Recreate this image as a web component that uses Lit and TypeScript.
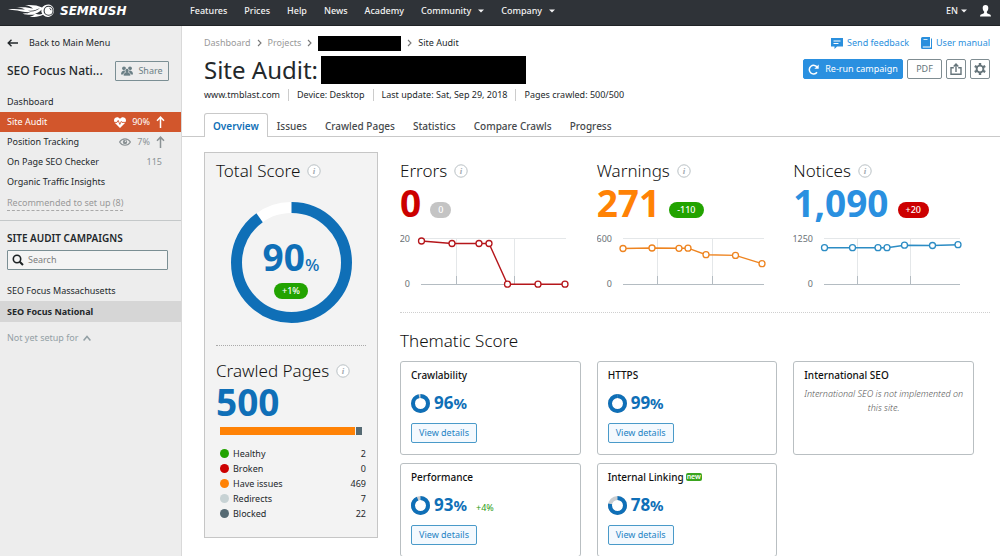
import { LitElement, html, svg, css } from "lit";
import { customElement, property } from "lit/decorators.js";

const caret = html`<svg class="caret" width="6" height="4" viewBox="0 0 6 4"><path d="M0 0.5h6L3 3.6z" fill="currentColor"/></svg>`;

@customElement("info-icon")
class InfoIcon extends LitElement {
  static styles = css`
    :host { display: inline-flex; }
    .mark { font: italic 700 9px "Liberation Serif", serif; }
  `;
  render() {
    return html`<svg width="14" height="14" viewBox="0 0 14 14" role="img" aria-label="Information">
      <circle cx="7" cy="7" r="6.2" fill="#fff" stroke="#b9c0c4" stroke-width="1"/>
      <text class="mark" x="7" y="10" text-anchor="middle" fill="#a3abb0">i</text>
    </svg>`;
  }
}

@customElement("ring-gauge")
class RingGauge extends LitElement {
  @property({ type: Number }) size = 20;
  @property({ type: Number }) thickness = 4;
  @property({ type: Number }) value = 0;
  @property() rest = "#c9cdd0";
  static styles = css`:host { display: inline-flex; }`;
  render() {
    const c = this.size / 2;
    const r = c - this.thickness / 2;
    const len = 2 * Math.PI * r;
    return html`<svg width=${this.size} height=${this.size} viewBox="0 0 ${this.size} ${this.size}">
      <circle cx=${c} cy=${c} r=${r} fill="none" stroke=${this.rest} stroke-width=${this.thickness}/>
      <circle cx=${c} cy=${c} r=${r} fill="none" stroke="#0f6fb7" stroke-width=${this.thickness}
        stroke-dasharray="${(len * this.value) / 100} ${len}" transform="rotate(-90 ${c} ${c})"/>
    </svg>`;
  }
}

@customElement("trend-chart")
class TrendChart extends LitElement {
  @property({ attribute: false }) points: number[][] = [];
  @property({ attribute: false }) ticks: number[] = [];
  @property({ type: Number }) start = 22;
  @property({ type: Number }) end = 166;
  @property() max = "";
  @property() color = "#c00";
  static styles = css`
    :host { display: block; }
    .axis { font: 9px "Noto Sans", sans-serif; fill: #6b7276; }
  `;
  render() {
    const lx = this.start - 11;
    return html`<svg width="180" height="62" viewBox="0 0 180 62">
      <path d="M${this.start} 9.5H${this.end}" stroke="#e4e7e9"/>
      <path d="M${this.start} 55.5H${this.end}" stroke="#b4bcc2"/>
      ${this.ticks.map(t => svg`<path d="M${t} 9.5V47" stroke="#e4e7e9"/><path d="M${t} 47V55" stroke="#b4bcc2"/>`)}
      <text class="axis" x=${lx} y="13" text-anchor="end">${this.max}</text>
      <text class="axis" x=${lx} y="58" text-anchor="end">0</text>
      <polyline points=${this.points.map(p => p.join(",")).join(" ")} fill="none" stroke=${this.color} stroke-width="1.4"/>
      ${this.points.map(p => svg`<circle cx=${p[0]} cy=${p[1]} r="3" fill="#fff" stroke=${this.color} stroke-width="1.3"/>`)}
    </svg>`;
  }
}

const metrics = [
  { name: "Errors", value: "0", delta: "0", tone: "red", pill: "grey", color: "#b5161b", max: "20", start: 21, end: 166, ticks: [56.5, 114.5],
    points: [[21.5, 12], [52, 14.5], [79, 14.5], [89, 14.5], [107.5, 55.2], [138, 55.2], [165, 55.2]] },
  { name: "Warnings", value: "271", delta: "-110", tone: "orange", pill: "green", color: "#ee8420", max: "600", start: 26, end: 167, ticks: [60.5, 115.5],
    points: [[26, 19.5], [55, 19], [82, 19.3], [91, 19.2], [109, 25.7], [138.5, 26.4], [165, 34.7]] },
  { name: "Notices", value: "1,090", delta: "+20", tone: "sky", pill: "crimson", color: "#2c8cc4", max: "1250", start: 31, end: 167, ticks: [64.5, 117.5],
    points: [[31.5, 18.7], [59.5, 18.7], [85, 18.7], [94, 18.7], [111.5, 16.2], [139.5, 16.5], [165, 15.7]] },
];

const themes = [
  { name: "Crawlability", value: 96 },
  { name: "HTTPS", value: 99 },
  { name: "International SEO", note: "International SEO is not implemented on this site." },
  { name: "Performance", value: 93, delta: "+4%" },
  { name: "Internal Linking", value: 78, badge: "new" },
];

const legend = [
  ["Healthy", "2", "#22a300"], ["Broken", "0", "#c00"], ["Have issues", "469", "#ff8205"],
  ["Redirects", "7", "#c7d2d4"], ["Blocked", "22", "#566a73"],
];

@customElement("app-root")
class AppRoot extends LitElement {
  static styles = css`
    :host { display: block; font-family: "Noto Sans", sans-serif; font-size: 9px; line-height: 16px; color: #23282b; background: #fff; }
    * { box-sizing: border-box; }
    a { color: inherit; text-decoration: none; }
    button { font: inherit; cursor: pointer; margin: 0; padding: 0; }
    h1, h2, h3, p, ul, dl, dd { margin: 0; padding: 0; font-weight: 400; }
    ul { list-style: none; }
    svg { flex: none; display: block; }
    .page { display: flex; flex-direction: column; height: 100vh; overflow: hidden; }

    .top { display: flex; align-items: center; height: 26px; flex: none; padding: 0 9px 3px 8px; background: #2f3338; color: #f2f2f2; border-bottom: 1px solid #202326; font-weight: 500; }
    .logo { display: flex; align-items: center; gap: 5px; width: 182px; }
    .word { font: italic 700 12px "DejaVu Sans", sans-serif; color: #fff; }
    .nav { display: flex; gap: 17px; flex: 1; }
    .nav a, .lang { display: flex; align-items: center; gap: 7px; }
    .lang { background: none; border: 0; color: inherit; margin-right: 13px; gap: 3px; }

    .body { display: flex; flex: 1; min-height: 0; }
    .side { width: 182px; flex: none; background: #ededed; border-right: 1px solid #d9d9d9; }
    .back { display: flex; align-items: center; gap: 11px; height: 34px; padding-left: 7px; }
    .project { display: flex; align-items: center; justify-content: space-between; height: 22px; padding: 0 12px 0 7px; }
    .project h2 { font-size: 12px; font-weight: 500; white-space: nowrap; }
    .share { display: flex; align-items: center; justify-content: center; gap: 5px; width: 54px; height: 20px; border: 1px solid #7b8f94; border-radius: 1px; background: transparent; color: #6b7f85; }
    .menu { padding-top: 10px; }
    .menu a { display: flex; align-items: center; height: 20px; padding: 0 16px 0 7px; }
    .menu .grow { flex: 1; }
    .menu .num { display: flex; align-items: center; gap: 6px; color: #8b9295; }
    .menu .count { padding-right: 3px; }
    .menu .on, .menu .on .num { color: #fff; }
    .menu .on { background: #d2562c; }
    .rec { padding: 3px 7px 9px; border-bottom: 1px solid #c4c8c9; color: #999; }
    .rec a { display: inline-block; line-height: 14px; border-bottom: 1px dashed #a9a9a9; }
    .camp { font-size: 10px; font-weight: 600; padding: 9px 7px 4px; }
    .search { display: flex; align-items: center; gap: 4px; height: 20px; margin: 0 13px 10px 7px; padding-left: 4px; border: 1px solid #7b8f94; border-radius: 1px; background: #f4f4f4; }
    .search input { flex: 1; min-width: 0; border: 0; outline: 0; padding: 0; background: none; font: inherit; }
    .search input::placeholder { color: #7d7d7d; opacity: 1; }
    .site { display: block; line-height: 21px; padding: 0 7px; }
    .site.sel { background: #d6d6d6; font-weight: 700; }
    .later { display: flex; align-items: center; gap: 5px; padding: 8px 7px; color: #93a0a5; }

    .main { flex: 1; min-width: 0; }
    .head { display: flex; justify-content: space-between; padding: 9px 10px 0 22px; }
    .crumbs { display: flex; align-items: center; gap: 6px; height: 16px; color: #999; }
    .crumbs .here { color: #23282b; }
    .crumbs svg { color: #777; }
    .mask { background: #000; }
    .crumbs .mask { width: 83px; height: 15px; }
    .title { display: flex; align-items: center; gap: 3px; height: 28px; margin-top: 5px; }
    .title h1 { font-size: 24px; line-height: 28px; white-space: nowrap; }
    .title .mask { width: 205px; height: 28px; }
    .facts { display: flex; margin-top: 3px; line-height: 16px; }
    .facts li { padding: 0 8px; border-left: 1px solid #ccc; line-height: 12px; margin: 2px 0; }
    .facts li:first-child { padding-left: 0; border: 0; }
    .tools { display: flex; flex-direction: column; align-items: flex-end; gap: 8px; }
    .links { display: flex; gap: 12px; color: #2a8fdd; }
    .links a { display: flex; align-items: center; gap: 4px; }
    .buttons { display: flex; gap: 4px; }
    .btn { display: flex; align-items: center; justify-content: center; height: 20px; border: 1px solid #7f8c91; border-radius: 2px; background: #fff; color: #66757b; }
    .btn.sq { width: 20px; }
    .btn.pdf { width: 35px; }
    .btn.go { width: 100px; gap: 6px; background: #2a90e0; border-color: #2a90e0; color: #fff; }
    .tabs { display: flex; height: 24px; margin-top: 10px; padding-left: 22px; border-bottom: 1px solid #c9c9c9; font-size: 10px; font-weight: 500; color: #45494c; }
    .tabs a { padding: 5px 8px 0; height: 24px; border: 1px solid transparent; border-bottom: 0; line-height: 14px; }
    .tabs .cur { color: #0f6fb7; font-weight: 600; background: #fff; border-color: #c9c9c9; border-radius: 3px 3px 0 0; }

    .cols { display: flex; align-items: flex-start; gap: 22px; padding: 15px 10px 0 22px; }
    .score { width: 174px; flex: none; padding: 7px 11px 16px; background: #f3f3f3; border: 1px solid #c6c6c6; }
    .h { display: flex; align-items: center; gap: 7px; height: 22px; font-size: 17px; line-height: 22px; font-weight: 300; white-space: nowrap; color: #111; }
    .gauge { display: grid; place-items: center; margin-top: 20px; }
    .gauge > * { grid-area: 1 / 1; }
    .inner { display: flex; flex-direction: column; align-items: center; margin-top: 12px; }
    .pct { font-size: 37px; line-height: 36px; font-weight: 700; color: #0f6fb7; }
    .pct small { font-size: 17px; font-weight: 500; }
    .pill { display: inline-flex; align-items: center; justify-content: center; height: 16px; padding: 0 8px; border-radius: 8px; color: #fff; font-weight: 500; }
    .grey { background: #c4c4c4; } .green { background: #22a300; } .crimson { background: #c00; }
    .sep { border: 0; margin: 22px 0 14px; border-top: 1px dotted #aaa; }
    .big { font-size: 37px; line-height: 40px; font-weight: 700; color: #0f6fb7; }
    .bar { display: flex; gap: 1px; height: 8px; margin: 5px 4px 11px; }
    .bar span { background: #ff8205; }
    .bar .blk { background: #566a73; }
    .legend { padding-left: 4px; }
    .legend div { display: flex; align-items: center; height: 15px; }
    .dot { width: 9px; height: 9px; border-radius: 50%; margin-right: 4px; }
    .legend dt { flex: 1; display: flex; align-items: center; }

    .right { flex: 1; min-width: 0; }
    .grid { display: grid; grid-template-columns: repeat(3, 1fr); }
    .metrics { padding: 8px 0 16px; border-bottom: 1px dotted #cfcfcf; }
    .line { display: flex; align-items: center; gap: 9px; height: 40px; margin: 1px 0 6px; }
    .line .pill { margin-top: 14px; }
    .val { font-size: 37px; line-height: 40px; font-weight: 700; }
    .red { color: #c00; } .orange { color: #ff8205; } .sky { color: #2a90e0; }
    .right > .h { margin: 17px 0 9px; }
    .cell { padding: 0 16px 8px 0; }
    .card { height: 94px; padding: 5px 10px; border: 1px solid #b9bfc2; border-radius: 3px; background: #fff; }
    .card h3 { display: flex; align-items: center; gap: 2px; font-size: 10px; line-height: 16px; font-weight: 500; color: #111; }
    .new { background: #3aa51f; color: #fff; font-size: 7px; line-height: 8px; padding: 0 1px; border-radius: 2px; font-weight: 600; }
    .res { display: flex; align-items: center; gap: 4px; height: 20px; margin: 10px 0; }
    .res b { font-size: 17px; color: #0f6fb7; }
    .res b small { font-size: 15px; }
    .res .up { color: #2a9d10; margin: 6px 0 0 5px; }
    .view { width: 66px; height: 20px; border: 1px solid #4a9ac9; border-radius: 2px; background: #f4f9fe; color: #2583c4; line-height: 18px; }
    .note { text-align: center; font-style: italic; font-weight: 300; line-height: 14px; color: #555; margin: 4px -7px 0; }
  `;

  render() {
    const chev = html`<svg width="5" height="8" viewBox="0 0 5 8"><path d="M1 1l3 3-3 3" fill="none" stroke="currentColor" stroke-width="1.1"/></svg>`;
    const up = html`<svg width="9" height="12" viewBox="0 0 9 12"><path d="M4.5 12V1.2M1 4.8l3.5-3.6L8 4.8" fill="none" stroke="currentColor" stroke-width="1.5"/></svg>`;
    return html`<div class="page">
      <header class="top">
        <a class="logo" href="#" aria-label="Semrush home">
          <svg width="47" height="14" viewBox="0 0 47 14" fill="#fff">
            <path d="M0 5.6C7 4.4 12 5.8 17 5.4C13 3.8 10 3.6 8 3.6C16 2.6 21 3.6 25 4.6C23 2.6 20 1.6 17 1C25 .6 30 1.4 34 3.4C35.6 1.6 38 .4 40.500 .4A6.300 6.300 0 1 1 35 10.800C31 13 26 13.400 21.500 12.400C24 12 26 11.200 27 10.400C23 11.200 18 11 14.500 9.400C18 9.500 21 9 22.500 8.200C16 8.400 12 7.400 9.500 6.600C6 6.200 3 6.200 0 5.600z"/>
            <path d="M20 6.500c5 .8 8-.8 12-2.200-3 2-5 3.500-10 3.300zM27 9.500c3-.4 5-2 6.500-4-.4 2 0 3 .8 4.200-2 1-4 1-7.300-.2z" fill="#2f3338"/>
            <circle cx="40.600" cy="6.700" r="4.500" fill="none" stroke="#2f3338" stroke-width="1.100"/>
            <path d="M41.500 4.300a2.300 2.300 0 0 1 1.500 1.900" fill="none" stroke="#2f3338"/>
          </svg>
          <span class="word">SEMRUSH</span>
        </a>
        <nav class="nav">
          <a href="#">Features</a><a href="#">Prices</a><a href="#">Help</a><a href="#">News</a><a href="#">Academy</a>
          <a href="#">Community ${caret}</a><a href="#">Company ${caret}</a>
        </nav>
        <button class="lang">EN ${caret}</button>
        <svg width="11" height="12" viewBox="0 0 11 12" fill="#fff"><path d="M5.500 0C3.600 0 2.700 1.300 2.700 3.100c0 1.600.7 2.900 1.500 3.600 0 1.300-.2 1.600-1.400 2C1.200 9.200 0 9.600 0 11.500h11c0-1.900-1.200-2.300-2.800-2.800-1.200-.4-1.400-.7-1.400-2 .8-.7 1.500-2 1.500-3.600C8.300 1.300 7.400 0 5.500 0z"/></svg>
      </header>
      <div class="body">
        <aside class="side">
          <a class="back" href="#"><svg width="11" height="8" viewBox="0 0 11 8"><path d="M11 4H1.300M4.500.8L1.200 4l3.300 3.200" fill="none" stroke="currentColor" stroke-width="1.400"/></svg>Back to Main Menu</a>
          <div class="project">
            <h2>SEO Focus Nati...</h2>
            <button class="share"><svg width="12" height="10" viewBox="0 0 12 10" fill="currentColor"><circle cx="3" cy="2.300" r="1.900"/><circle cx="9" cy="2.300" r="1.900"/><path d="M0 8.500c0-2.500 1-3.500 3-4l6 0c2 .5 3 1.500 3 4z"/><path d="M6 2.400c-1.300 0-1.900.9-1.900 2 0 .8.300 1.400.7 1.800C3.200 6.700 2.300 7.500 2.300 10h7.400c0-2.500-.9-3.300-2.500-3.800.4-.4.700-1 .7-1.800 0-1.100-.6-2-1.900-2z" stroke="#ededed" stroke-width=".7"/></svg>Share</button>
          </div>
          <nav class="menu">
            <a href="#">Dashboard</a>
            <a class="on" href="#"><span class="grow">Site Audit</span><span class="num">
              <svg width="12" height="11" viewBox="0 0 12 11"><path d="M6 11L1 5.900C-.4 4.300-.2 2.200 1 1c1.500-1.400 3.800-1.100 5 .8C7.200-.1 9.500-.4 11 1c1.200 1.200 1.400 3.300 0 4.900z" fill="#fff"/><path d="M0 5.400h3l1.200-2 1.600 4 1.500-3 .7 1H12" fill="none" stroke="#d2562c" stroke-width=".9"/></svg>
              90% ${up}</span></a>
            <a href="#"><span class="grow">Position Tracking</span><span class="num">
              <svg width="12" height="8" viewBox="0 0 12 8"><path d="M.6 4C3-.3 9-.3 11.400 4 9 8.300 3 8.300.6 4z" fill="none" stroke="currentColor" stroke-width="1.200"/><circle cx="6" cy="4" r="2.200" fill="currentColor"/><circle cx="6.500" cy="3.300" r=".7" fill="#ededed"/></svg>
              7% ${up}</span></a>
            <a href="#"><span class="grow">On Page SEO Checker</span><span class="num count">115</span></a>
            <a href="#">Organic Traffic Insights</a>
          </nav>
          <div class="rec"><a href="#">Recommended to set up (8)</a></div>
          <h2 class="camp">SITE AUDIT CAMPAIGNS</h2>
          <label class="search"><svg width="12" height="12" viewBox="0 0 12 12"><circle cx="5" cy="5" r="3.700" fill="none" stroke="#1d2224" stroke-width="1.600"/><path d="M7.700 7.700l3.300 3.300" stroke="#1d2224" stroke-width="2"/></svg><input type="text" placeholder="Search" aria-label="Search"></label>
          <a class="site" href="#">SEO Focus Massachusetts</a>
          <a class="site sel" href="#">SEO Focus National</a>
          <a class="later" href="#">Not yet setup for <svg width="8" height="6" viewBox="0 0 8 6"><path d="M.6 5.400L4 1.400l3.400 4" fill="none" stroke="currentColor" stroke-width="1.500"/></svg></a>
        </aside>
        <main class="main">
          <div class="head">
            <div>
              <nav class="crumbs"><a href="#">Dashboard</a>${chev}<a href="#">Projects</a>${chev}<span class="mask"></span>${chev}<span class="here">Site Audit</span></nav>
              <div class="title"><h1>Site Audit:</h1><span class="mask"></span></div>
              <ul class="facts"><li><a href="#">www.tmblast.com</a></li><li>Device: Desktop</li><li>Last update: Sat, Sep 29, 2018</li><li>Pages crawled: 500/500</li></ul>
            </div>
            <div class="tools">
              <div class="links">
                <a href="#"><svg width="12" height="11" viewBox="0 0 12 11"><path d="M0 0h12v8.500H6L3.500 11V8.500H0z" fill="currentColor"/><path d="M2.500 3h7M2.500 5.500h5" stroke="#fff"/></svg>Send feedback</a>
                <a href="#"><svg width="11" height="12" viewBox="0 0 11 12"><path d="M1.500 0H9v9.500H1.800v1H10V1.500h1V12H1.500A1.500 1.500 0 0 1 0 10.500v-9A1.500 1.500 0 0 1 1.500 0z" fill="currentColor"/><path d="M2.500 2.500h4" stroke="#fff" stroke-width=".8"/></svg>User manual</a>
              </div>
              <div class="buttons">
                <button class="btn go"><svg width="11" height="11" viewBox="0 0 11 11"><path d="M9 8.300A4.300 4.300 0 1 1 9.300 3.500" fill="none" stroke="#fff" stroke-width="1.500"/><path d="M10.700.4v4.300H6.400z" fill="#fff"/></svg>Re-run campaign</button>
                <button class="btn pdf">PDF</button>
                <button class="btn sq" aria-label="Export"><svg width="12" height="12" viewBox="0 0 12 12"><path d="M3.800 4.700H1v6.600h10V4.700H8.200M6 9V1.500M3.700 3.500L6 1.100l2.300 2.400" fill="none" stroke="currentColor" stroke-width="1.400"/></svg></button>
                <button class="btn sq" aria-label="Settings"><svg width="12" height="12" viewBox="0 0 12 12"><path d="M6 0v2.500M6 9.500V12M.8 3l2.200 1.300M9 7.700L11.200 9M.8 9L3 7.700M9 4.300L11.200 3" fill="none" stroke="currentColor" stroke-width="2.400"/><circle cx="6" cy="6" r="3.400" fill="none" stroke="currentColor" stroke-width="1.900"/></svg></button>
              </div>
            </div>
          </div>
          <nav class="tabs"><a class="cur" href="#">Overview</a><a href="#">Issues</a><a href="#">Crawled Pages</a><a href="#">Statistics</a><a href="#">Compare Crawls</a><a href="#">Progress</a></nav>
          <div class="cols">
            <section class="score">
              <h2 class="h">Total Score <info-icon></info-icon></h2>
              <div class="gauge">
                <ring-gauge size="121" thickness="11" value="90" rest="#fff"></ring-gauge>
                <div class="inner"><div class="pct">90<small>%</small></div><span class="pill green">+1%</span></div>
              </div>
              <hr class="sep">
              <h2 class="h">Crawled Pages <info-icon></info-icon></h2>
              <div class="big">500</div>
              <div class="bar"><span style="flex:469"></span><span class="blk" style="flex:22"></span></div>
              <dl class="legend">${legend.map(l => html`<div><dt><span class="dot" style="background:${l[2]}"></span>${l[0]}</dt><dd>${l[1]}</dd></div>`)}</dl>
            </section>
            <div class="right">
              <div class="grid metrics">${metrics.map(m => html`<section>
                <h2 class="h">${m.name} <info-icon></info-icon></h2>
                <div class="line"><span class="val ${m.tone}">${m.value}</span><span class="pill ${m.pill}">${m.delta}</span></div>
                <trend-chart .points=${m.points} .ticks=${m.ticks} start=${m.start} end=${m.end} max=${m.max} color=${m.color}></trend-chart>
              </section>`)}</div>
              <h2 class="h">Thematic Score</h2>
              <div class="grid">${themes.map(t => html`<div class="cell"><article class="card">
                <h3>${t.name} ${t.badge ? html`<span class="new">${t.badge}</span>` : ""}</h3>
                ${t.note ? html`<p class="note">${t.note}</p>` : html`
                  <div class="res"><ring-gauge size="19" thickness="4" value=${t.value!}></ring-gauge><b>${t.value}<small>%</small></b>${t.delta ? html`<span class="up">${t.delta}</span>` : ""}</div>
                  <button class="view">View details</button>`}
              </article></div>`)}</div>
            </div>
          </div>
        </main>
      </div>
    </div>`;
  }
}
